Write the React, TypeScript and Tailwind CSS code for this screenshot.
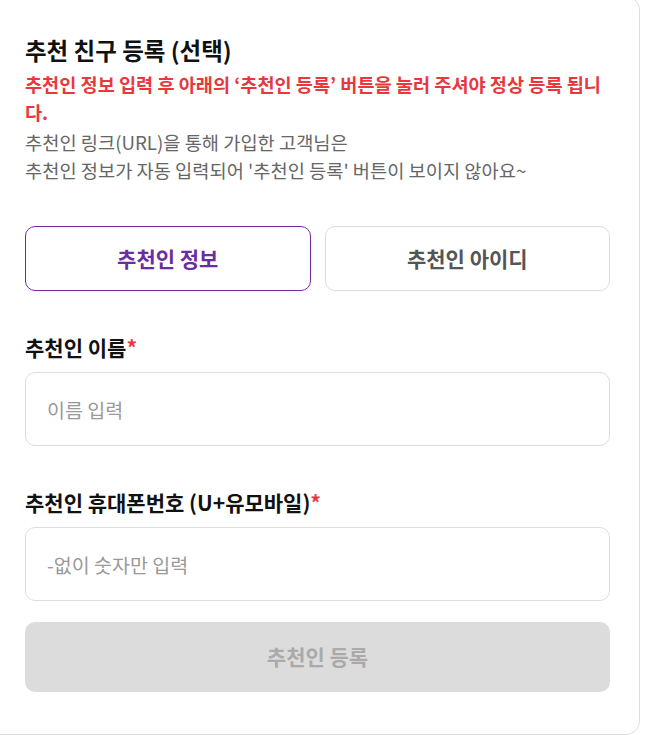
import { useState } from 'react';

const font = { fontFamily: '"Noto Sans CJK KR", "Noto Sans", sans-serif' };

export default function App() {
  const [tab, setTab] = useState<'info' | 'id'>('info');
  const [name, setName] = useState('');
  const [phone, setPhone] = useState('');

  return (
    <div className="w-[645px] h-[735px] overflow-hidden bg-white" style={font}>
      <div className="ml-[-20px] mt-[-4px] w-[660px] h-[739px] border border-[#dddddd] rounded-[14px] pl-[44px] pr-[29px] pt-[38px]">
        <h1 className="text-[23.5px] leading-[30px] font-bold text-[#111]">추천 친구 등록 (선택)</h1>
        <p className="mt-[5px] text-[18.6px] leading-[28px] font-bold text-[#e8383d]">
          추천인 정보 입력 후 아래의 ‘추천인 등록’ 버튼을 눌러 주셔야 정상 등록 됩니다.
        </p>
        <p className="mt-[2px] text-[18.7px] leading-[28px] text-[#666]">
          추천인 링크(URL)을 통해 가입한 고객님은
          <br />
          추천인 정보가 자동 입력되어 '추천인 등록' 버튼이 보이지 않아요~
        </p>

        <div className="mt-[42px] grid grid-cols-2 gap-[14px]">
          <button
            onClick={() => setTab('info')}
            className={`h-[65px] rounded-[10px] border text-[21px] font-bold ${
              tab === 'info' ? 'border-[#6b2d9f] text-[#6b2d9f]' : 'border-[#dddddd] text-[#555]'
            }`}
          >
            추천인 정보
          </button>
          <button
            onClick={() => setTab('id')}
            className={`h-[65px] rounded-[10px] border text-[21px] font-bold ${
              tab === 'id' ? 'border-[#6b2d9f] text-[#6b2d9f]' : 'border-[#dddddd] text-[#555]'
            }`}
          >
            추천인 아이디
          </button>
        </div>

        <label className="mt-[43px] block text-[21px] leading-[26px] font-bold text-[#111]">
          추천인 이름<span className="text-[#e8383d]">*</span>
        </label>
        <input
          value={name}
          onChange={(e) => setName(e.target.value)}
          placeholder="이름 입력"
          className="mt-[12px] w-full h-[74px] rounded-[10px] border border-[#dddddd] px-[21px] text-[19.5px] text-[#111] placeholder:text-[#999] outline-none"
        />

        <label className="mt-[43px] block text-[21px] leading-[26px] font-bold text-[#111]">
          추천인 휴대폰번호 (U+유모바일)<span className="text-[#e8383d]">*</span>
        </label>
        <input
          value={phone}
          onChange={(e) => setPhone(e.target.value)}
          placeholder="-없이 숫자만 입력"
          className="mt-[12px] w-full h-[74px] rounded-[10px] border border-[#dddddd] px-[21px] text-[19.5px] text-[#111] placeholder:text-[#999] outline-none"
        />

        <button
          disabled
          className="mt-[21px] w-full h-[70px] rounded-[10px] bg-[#dcdcdc] text-[21px] font-bold text-[#aaaaaa]"
        >
          추천인 등록
        </button>
      </div>
    </div>
  );
}
